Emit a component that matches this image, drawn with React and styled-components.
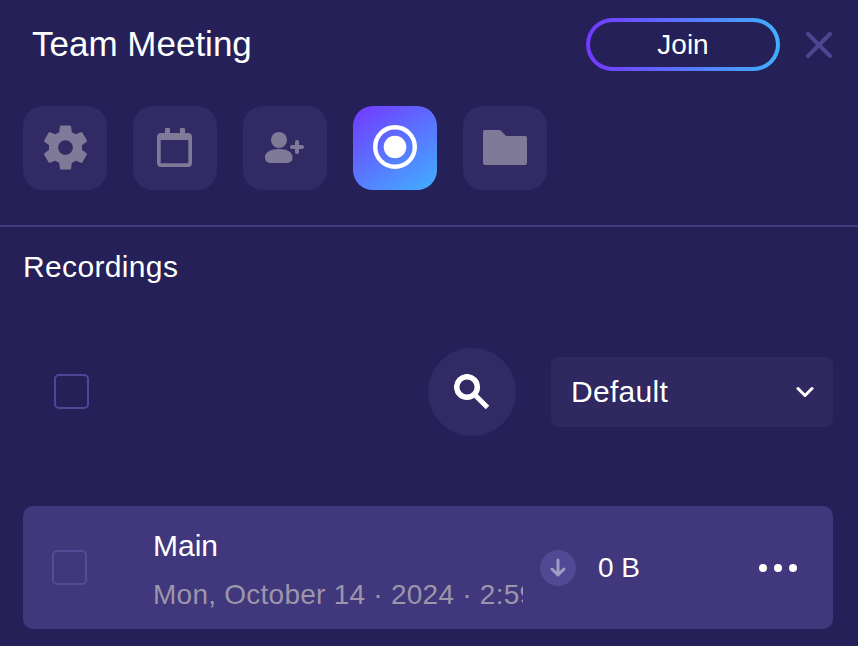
import React from "react";
import styled, { createGlobalStyle } from "styled-components";

const Global = createGlobalStyle`
  html, body { margin: 0; padding: 0; background: #252057; }
  * { box-sizing: border-box; }
  body { font-family: "Liberation Sans", Arial, sans-serif; color: #fff; }
`;
const Page = styled.div`
  width: 858px; height: 646px; overflow: hidden; background: #252057;
`;
const Header = styled.header`
  display: flex; align-items: center; height: 53px; margin-top: 18px; padding: 0 26px 0 32px;
`;
const Title = styled.h1`
  flex: 1; margin: 0 0 2px; font-size: 35px; font-weight: 400; line-height: 51px;
`;
const JoinButton = styled.button`
  width: 194px; height: 53px; border: 4px solid transparent; border-radius: 27px; padding: 0;
  background: linear-gradient(#252057, #252057) padding-box, linear-gradient(90deg, #7338ff, #40b0ff) border-box;
  color: #fff; font: 28px "Liberation Sans", Arial, sans-serif;
`;
const CloseButton = styled.button`
  display: flex; width: 26px; height: 26px; margin-left: 26px; padding: 0; border: 0; background: none;
`;
const Tabs = styled.nav`
  display: flex; gap: 26px; margin-top: 35px; padding-left: 23px;
`;
const Tab = styled.div`
  width: 84px; height: 84px; border-radius: 20px; display: flex;
  background: ${p => p.$active ? "linear-gradient(145deg, #7338ff, #40b0ff)" : "#322a64"};
  color: ${p => p.$active ? "#fff" : "#7f7a98"};
`;
const Divider = styled.hr`
  height: 2px; margin: 35px 0 0; border: 0; background: #453a82;
`;
const SectionTitle = styled.h2`
  margin: 23px 0 0 23px; font-size: 30px; font-weight: 400; line-height: 34px; letter-spacing: 0.35px;
`;
const Controls = styled.div`
  display: flex; align-items: center; height: 88px; margin-top: 64px; padding: 0 25px 0 54px;
`;
const Check = styled.span`
  flex: none; display: block; width: 35px; height: 35px; border-radius: 5px;
  margin-bottom: ${p => p.$muted ? 0 : 1}px;
  border: 2px solid ${p => p.$muted ? "#554b97" : "#4f4699"};
`;
const SearchButton = styled.button`
  display: flex; align-items: center; justify-content: center; width: 88px; height: 88px;
  margin-left: auto; padding: 0; border: 0; border-radius: 50%; background: #322a64;
`;
const Select = styled.div`
  display: flex; align-items: center; justify-content: space-between; width: 282px; height: 70px;
  margin-left: 35px; padding: 0 19px 0 20px; border-radius: 8px; background: #2f2861;
  font-size: 30px; letter-spacing: 0.3px;
`;
const Row = styled.div`
  display: flex; align-items: center; height: 123px; margin: 70px 25px 0 23px; padding-left: 29px;
  border-radius: 10px; background: #41377c;
`;
const Info = styled.div`
  width: 370px; margin-left: 66px; padding-top: 4px; overflow: hidden; white-space: nowrap;
`;
const Name = styled.div`
  font-size: 30px; line-height: 36px;
`;
const DateText = styled.div`
  margin-top: 15px; font-size: 28px; line-height: 32px; letter-spacing: 0.25px; color: #9b96aa;
`;
const Download = styled.span`
  flex: none; display: flex; width: 36px; height: 36px; margin-left: 17px; border-radius: 50%; background: #524894;
`;
const Size = styled.span`
  margin-left: 22px; font-size: 28px;
`;
const Dots = styled.div`
  display: flex; gap: 7px; margin-left: auto; margin-right: 36px;
`;
const Dot = styled.span`
  width: 8px; height: 8px; border-radius: 50%; background: #fff;
`;

const Gear = () => (
  <svg width="84" height="84" viewBox="0 0 84 84"><g transform="translate(14.9 13.9) scale(2.3)">
    <path fill="currentColor" fillRule="evenodd" d="M19.14 12.94c.04-.3.06-.61.06-.94 0-.32-.02-.64-.07-.94l2.03-1.58c.18-.14.23-.41.12-.61l-1.92-3.32c-.12-.22-.37-.29-.59-.22l-2.39.96c-.5-.38-1.03-.7-1.62-.94l-.36-2.54c-.04-.24-.24-.41-.48-.41h-3.84c-.24 0-.43.17-.47.41l-.36 2.54c-.59.24-1.13.57-1.62.94l-2.39-.96c-.22-.08-.47 0-.59.22L2.74 8.87c-.12.21-.08.47.12.61l2.03 1.58c-.05.3-.09.63-.09.94s.02.64.07.94l-2.03 1.58c-.18.14-.23.41-.12.61l1.92 3.32c.12.22.37.29.59.22l2.39-.96c.5.38 1.03.7 1.62.94l.36 2.54c.05.24.24.41.48.41h3.84c.24 0 .44-.17.47-.41l.36-2.54c.59-.24 1.13-.56 1.62-.94l2.39.96c.22.08.47 0 .59-.22l1.92-3.32c.12-.22.07-.47-.12-.61l-2.01-1.58zM12 15.2c-1.77 0-3.2-1.43-3.2-3.2s1.43-3.2 3.2-3.2 3.2 1.43 3.2 3.2-1.43 3.2-3.2 3.2z" />
  </g></svg>
);
const Calendar = () => (
  <svg width="84" height="84" viewBox="0 0 84 84" fill="currentColor">
    <rect x="32" y="22" width="5" height="8" rx="1" />
    <rect x="47" y="22" width="5" height="8" rx="1" />
    <path fillRule="evenodd" d="M28 27h27a4 4 0 0 1 4 4v26a4 4 0 0 1-4 4H28a4 4 0 0 1-4-4V31a4 4 0 0 1 4-4zM27.7 34v23.3h27.6V34z" />
  </svg>
);
const PersonAdd = () => (
  <svg width="84" height="84" viewBox="0 0 84 84" fill="currentColor">
    <circle cx="36" cy="34" r="8" />
    <path d="M22 51c0-5 6-8 14-8s13.500 3 13.500 8v1a5 5 0 0 1-5 5H27a5 5 0 0 1-5-5z" />
    <rect x="47" y="39" width="14" height="4" rx="2" />
    <rect x="52" y="34" width="4" height="14" rx="2" />
  </svg>
);
const RecordIcon = () => (
  <svg width="84" height="84" viewBox="0 0 84 84">
    <circle cx="42" cy="41" r="19.8" fill="none" stroke="currentColor" strokeWidth="4.4" />
    <circle cx="42" cy="41" r="11.3" fill="currentColor" />
  </svg>
);
const Folder = () => (
  <svg width="84" height="84" viewBox="0 0 84 84" fill="currentColor">
    <path d="M22 24h14a3 3 0 0 1 2.200 1l4.800 5h19a2 2 0 0 1 2 2v25a2 2 0 0 1-2 2H22a2 2 0 0 1-2-2V26a2 2 0 0 1 2-2z" />
  </svg>
);
const CloseIcon = () => (
  <svg width="26" height="26" viewBox="0 0 26 26" fill="none" stroke="#4e4590" strokeWidth="4" strokeLinecap="round">
    <path d="M2 2l22 22M24 2L2 24" />
  </svg>
);
const SearchIcon = () => (
  <svg width="36" height="36" viewBox="0 0 36 36" fill="none" stroke="#fff">
    <circle cx="13" cy="13" r="10.300" strokeWidth="5.500" />
    <path d="M21 21l12.500 12.500" strokeWidth="5" />
  </svg>
);
const Chevron = () => (
  <svg width="18" height="12" viewBox="0 0 18 12" fill="none" stroke="#fff" strokeWidth="3" strokeLinecap="round" strokeLinejoin="round">
    <path d="M2 2.500l7 7 7-7" />
  </svg>
);
const ArrowDown = () => (
  <svg width="36" height="36" viewBox="0 0 36 36" fill="none" stroke="#a29dc6" strokeWidth="3" strokeLinecap="round" strokeLinejoin="round">
    <path d="M18 10v15M12 19l6 6 6-6" />
  </svg>
);

export default function App() {
  return (
    <Page>
      <Global />
      <Header>
        <Title>Team Meeting</Title>
        <JoinButton>Join</JoinButton>
        <CloseButton aria-label="Close"><CloseIcon /></CloseButton>
      </Header>
      <Tabs>
        <Tab><Gear /></Tab>
        <Tab><Calendar /></Tab>
        <Tab><PersonAdd /></Tab>
        <Tab $active><RecordIcon /></Tab>
        <Tab><Folder /></Tab>
      </Tabs>
      <Divider />
      <SectionTitle>Recordings</SectionTitle>
      <Controls>
        <Check />
        <SearchButton aria-label="Search"><SearchIcon /></SearchButton>
        <Select>Default<Chevron /></Select>
      </Controls>
      <Row>
        <Check $muted />
        <Info>
          <Name>Main</Name>
          <DateText>Mon, October 14 · 2024 · 2:59 PM</DateText>
        </Info>
        <Download><ArrowDown /></Download>
        <Size>0 B</Size>
        <Dots><Dot /><Dot /><Dot /></Dots>
      </Row>
    </Page>
  );
}
